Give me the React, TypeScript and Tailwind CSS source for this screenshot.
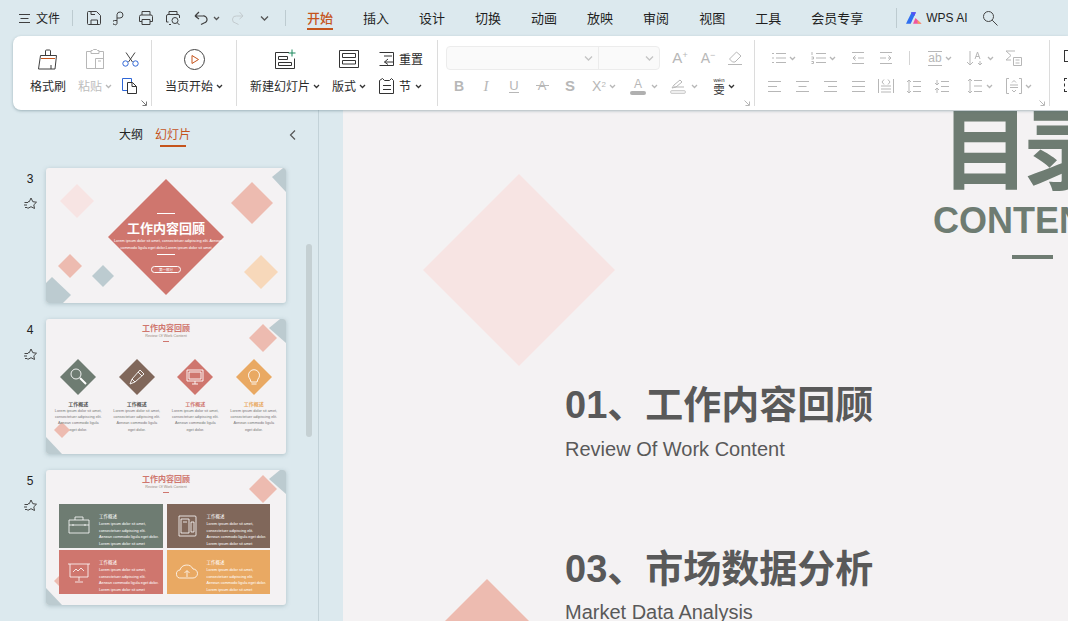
import React from "react";

const UI = "font-['Noto_Sans_CJK_SC','Noto_Sans',sans-serif]";
const LOREM = "Lorem ipsum dolor sit amet, consectetuer adipiscing elit. Aenean commodo ligula eget dolor.";

function I({ w = 16, h = 16, vb, c, children }: { w?: number; h?: number; vb?: string; c?: string; children: React.ReactNode }) {
  return (
    <svg width={w} height={h} viewBox={vb ?? `0 0 ${w} ${h}`} fill="none" stroke={c ?? "#3f3f3f"} strokeWidth="1" className="shrink-0">
      {children}
    </svg>
  );
}
const Chev = ({ c = "#555", s = 7 }: { c?: string; s?: number }) => (
  <svg width={s} height={5} viewBox={s === 7 ? "0 0 7 5" : "0 0 9 5"} fill="none" stroke={c} strokeWidth="1.3" className="shrink-0">
    {s === 7 ? <path d="M1 1l2.500 2.500L6 1" /> : <path d="M1 .5l3.500 3.500L8 .5" />}
  </svg>
);
const M = "#b7b7b7";

const Corner = ({ c = M }: { c?: string }) => (
  <svg width="6" height="6" viewBox="0 0 6 6" fill="none" stroke={c} strokeWidth="1" className="shrink-0">
    <path d="M.5 .5L5 5M5.500 1.500v4h-4" />
  </svg>
);

function TopBar() {
  const tabs = ["插入", "设计", "切换", "动画", "放映", "审阅", "视图", "工具"];
  return (
    <div className="flex h-[36px] shrink-0 items-center pl-[19px] text-[#1f1f1f]">
      <I w={11} h={11}>
        <path d="M0 1.500h11M1.500 5.500h8M0 9.500h11" />
      </I>
      <span className="ml-[6px] text-[12px]">文件</span>
      <div className="ml-[12px] h-[16px] w-px bg-[#bdcbd0]" />
      <div className="ml-[13px] flex items-center gap-[11px]">
        <I w={16} h={16}>
          <path d="M1.500 2.500a1 1 0 0 1 1-1h8l4 4v8a1 1 0 0 1-1 1h-11a1 1 0 0 1-1-1zM5 14.500V10h6.500v4.500M5 1.500v3h4" />
        </I>
        <I w={14} h={16}>
          <path d="M1.500 14.500a2 2 0 0 1 0-4h2.500v3a1.600 1.600 0 0 1-2.500 1zM4 10.500V4.500a3 3 0 1 1 3 3.500H4" />
        </I>
        <I w={16} h={16}>
          <path d="M4 5V1.500h8V5M4 11.500H1.500V6.500a1.500 1.500 0 0 1 1.500-1.500h10a1.500 1.500 0 0 1 1.500 1.500v5H12M4 9.500h8v5H4z" />
        </I>
        <I w={16} h={16}>
          <path d="M4 4.500V1.500h8v3M3.500 12H1.500V6a1.500 1.500 0 0 1 1.500-1.500h10A1.500 1.500 0 0 1 14.500 6v2M6 14.500H4" />
          <circle cx="10" cy="10.500" r="3" />
          <path d="M12.200 12.700l2.300 2.300" />
        </I>
      </div>
      <div className="ml-[13px]">
        <I w={14} h={16}>
          <path d="M1 6l4-4M1 6l4 3M1 6h8a3.500 3.500 0 0 1 1 7l-3 1.500" strokeWidth="1.200" />
        </I>
      </div>
      <div className="ml-[5px]"><Chev /></div>
      <div className="ml-[12px]">
        <I w={12} h={16} c="#c3cbce">
          <path d="M11 6L7.500 2M11 6L7.500 9M11 6H4.500a3.300 3.300 0 0 0-1 7l3 1.500" />
        </I>
      </div>
      <div className="ml-[16px]"><Chev s={9} /></div>
      <div className="ml-[16px] h-[16px] w-px bg-[#bdcbd0]" />
      <div className="ml-[21px] flex h-[36px] flex-col items-center justify-center">
        <span className="mt-[2px] text-[13px] leading-[18px] font-medium text-[#c5541c]">开始</span>
        <div className="mt-[1px] h-[2px] w-[26px] bg-[#c5541c]" />
      </div>
      <div className="ml-[30px] flex gap-[30px] text-[13px]">
        {tabs.map((t) => (
          <span key={t}>{t}</span>
        ))}
      </div>
      <span className="ml-[30px] text-[13px]">会员专享</span>
      <div className="ml-[33px] h-[20px] w-px bg-[#bdcbd0]" />
      <svg width="16" height="12" viewBox="0 0 17 12" className="ml-[9px]">
        <path d="M0 12L6 0h4.500L5 12z" fill="#2f6ff0" />
        <path d="M5 0h5.500L9 4z" fill="#5a4df2" />
        <path d="M7.500 12L10 6l6.500 6z" fill="#f0559f" />
        <path d="M12 8l4.500 4h-4z" fill="#f7a05a" />
      </svg>
      <span className="ml-[4px] font-['Liberation_Sans',sans-serif] text-[12px]">WPS AI</span>
      <div className="ml-[14px]">
        <I w={16} h={16} c="#444">
          <circle cx="6.500" cy="6.500" r="5" />
          <path d="M10.200 10.200l5.300 5.300" />
        </I>
      </div>
    </div>
  );
}

function BigCol({ w, icon, label, chev, muted }: { w: string; icon: React.ReactNode; label: string; chev?: boolean; muted?: boolean }) {
  return (
    <div className={`flex shrink-0 flex-col items-center ${w}`}>
      <div className="flex h-[28px] items-center justify-center">{icon}</div>
      <div className={`flex h-[26px] items-center gap-[3px] text-[12px] whitespace-nowrap ${muted ? "text-[#bdbdbd]" : "text-[#2a2a2a]"}`}>
        {label}
        {chev && <Chev c={muted ? M : "#333"} />}
      </div>
    </div>
  );
}

const Sep = () => <div className="h-[66px] w-px shrink-0 self-center bg-[#dcdcdc]" />;

function Slot({ w, children, gap = "gap-[3px]" }: { w: string; children: React.ReactNode; gap?: string }) {
  return <div className={`flex shrink-0 items-center justify-center ${gap} ${w}`}>{children}</div>;
}

const Lines = ({ a }: { a: "l" | "c" | "r" | "j" }) => {
  const m: Record<string, string> = {
    l: "M1 2.500h13M1 7.500h9M1 12.500h13",
    c: "M1 2.500h13M3.500 7.500h8M1 12.500h13",
    r: "M1 2.500h13M5 7.500h9M1 12.500h13",
    j: "M1 2.500h13M1 7.500h13M1 12.500h13",
  };
  return (
    <I w={15} h={15} c={M}>
      <path d={m[a]} />
    </I>
  );
};

function Ribbon() {
  return (
    <div className="relative z-10 ml-[13px] flex h-[74px] shrink-0 overflow-hidden rounded-l-[8px] bg-white shadow-[0_1px_3px_rgba(80,110,120,0.45)]">
      {/* clipboard */}
      <div className="relative flex w-[138px] shrink-0 pt-[9px] pl-[13px]">
        <BigCol
          w="w-[44px]"
          label="格式刷"
          icon={
            <I w={20} h={21}>
              <path d="M7.500 6.500V2a1 1 0 0 1 1-1h3a1 1 0 0 1 1 1v4.500" />
              <path d="M2.500 6.500h16l-1.500 13.500H.5z" />
              <path d="M3 9.500h14" stroke="#c5541c" />
              <path d="M13 20v-4" />
            </I>
          }
        />
        <BigCol
          w="w-[50px]"
          label="粘贴"
          muted
          chev
          icon={
            <I w={20} h={20} c={M}>
              <path d="M6 2.500H1.500v17h17v-17H14M6 1.500h1.500l1-1h3l1 1H14v3H6zM10.500 9.500h8v10h-8zM13 12h3" />
            </I>
          }
        />
        <div className="flex w-[20px] shrink-0 flex-col items-center">
          <div className="flex h-[28px] items-center">
            <svg width="17" height="15" viewBox="0 0 17 15" fill="none" strokeWidth="1">
              <path d="M4 .5l6.500 9.500M13 .5L6.500 10" stroke="#444" />
              <circle cx="3.500" cy="11.500" r="2.700" stroke="#2f66d6" />
              <circle cx="13.500" cy="11.500" r="2.700" stroke="#2f66d6" />
            </svg>
          </div>
          <div className="flex h-[26px] items-center">
            <svg width="16" height="16" viewBox="0 0 16 16" fill="none" strokeWidth="1">
              <path d="M5 12.500H.5V.5h9v4" stroke="#2f66d6" />
              <path d="M5.500 4.500h5l4 4v7h-9zM10 4.500v4h4.500" stroke="#333" />
            </svg>
          </div>
        </div>
        <div className="absolute right-[4px] bottom-[4px]"><Corner c="#777" /></div>
      </div>
      <Sep />
      {/* play */}
      <div className="flex w-[84px] shrink-0 pt-[9px]">
        <BigCol
          w="w-full"
          label="当页开始"
          chev
          icon={
            <svg width="21" height="21" viewBox="0 0 21 21" fill="none">
              <circle cx="10.500" cy="10.500" r="10" stroke="#444" />
              <path d="M8 6.500l6.500 4-6.500 4z" stroke="#c5541c" />
            </svg>
          }
        />
      </div>
      <Sep />
      {/* slides */}
      <div className="flex w-[200px] shrink-0 pt-[9px]">
        <BigCol
          w="w-[90px] ml-[3px]"
          label="新建幻灯片"
          chev
          icon={
            <svg width="21" height="20" viewBox="0 0 21 20" fill="none" stroke="#333">
              <path d="M14 3.500H.5v16h19v-10M3.500 7.500h9v3h-9zM3.500 13.500h13v3h-13z" />
              <path d="M17 .5v7M13.500 4h7" stroke="#1c8a5e" />
            </svg>
          }
        />
        <BigCol
          w="w-[38px]"
          label="版式"
          chev
          icon={
            <I w={20} h={18} c="#333">
              <path d="M.5.5h19v17H.5zM3.500 3.500h13v4h-13zM3.500 10.500h13v3.500h-13z" />
            </I>
          }
        />
        <div className="ml-[11px] flex flex-col">
          <div className="flex h-[28px] items-center gap-[2px] text-[12px] text-[#2a2a2a]">
            <I w={18} h={16} c="#333">
              <path d="M.5 1.500h14v13H.5M5 5h8M14.500 5v2M9 8l-3.500 3L9 13.500M5.500 11H14" />
            </I>
            重置
          </div>
          <div className="flex h-[26px] items-center gap-[4px] text-[12px] text-[#2a2a2a]">
            <I w={16} h={16} c="#333">
              <path d="M.5 2.500l3-2 2 2h5l2-2 2 2v13H.5zM4 7.500h8M4 11.500h8" />
            </I>
            节
            <Chev c="#333" />
          </div>
        </div>
      </div>
      <Sep />
      {/* font */}
      <div className="relative flex w-[316px] shrink-0 flex-col pt-[10px] pl-[8px]">
        <div className="flex h-[24px] items-center">
          <div className="flex h-[24px] w-[214px] rounded-[4px] border border-[#ececec] bg-[#fafafa]">
            <div className="flex w-[152px] items-center justify-end border-r border-[#ececec] pr-[5px]"><Chev c="#c4c4c4" s={9} /></div>
            <div className="flex flex-1 items-center justify-end pr-[5px]"><Chev c="#c4c4c4" s={9} /></div>
          </div>
          <Slot w="w-[32px] ml-[4px]">
            <span className="font-['Liberation_Sans',sans-serif] text-[15px] text-[#b7b7b7]">A<sup className="text-[9px]">+</sup></span>
          </Slot>
          <Slot w="w-[24px]">
            <span className="font-['Liberation_Sans',sans-serif] text-[14px] text-[#b7b7b7]">A<sup className="text-[9px]">−</sup></span>
          </Slot>
          <Slot w="w-[30px]">
            <I w={16} h={16} c={M}>
              <path d="M5.500 12l-3-3L9.500 2l4.500 4-6 6zM1 14.500h14" />
            </I>
          </Slot>
        </div>
        <div className="mt-[4px] flex h-[24px] items-center font-['Liberation_Sans',sans-serif] text-[#b7b7b7]">
          <Slot w="w-[26px]"><span className="text-[14px] font-bold">B</span></Slot>
          <Slot w="w-[28px]"><span className="font-['Liberation_Serif',serif] text-[15px] italic">I</span></Slot>
          <Slot w="w-[28px]"><span className="border-b border-[#b7b7b7] text-[13px] leading-[13px]">U</span></Slot>
          <Slot w="w-[28px]"><span className="relative text-[13px]">A<span className="absolute top-[9px] left-[-2px] h-px w-[13px] bg-[#b7b7b7]" /></span></Slot>
          <Slot w="w-[28px]"><span className="text-[15px] font-bold">S</span></Slot>
          <Slot w="w-[40px]"><span className="text-[14px]">X<sup className="text-[8px]">2</sup></span><Chev c={M} /></Slot>
          <Slot w="w-[40px]" gap="gap-[5px]">
            <span className="flex flex-col items-center text-[12px] leading-[12px]">A<span className="mt-[1px] h-[4px] w-[16px] rounded-[2px] bg-[#b0b0b0]" /></span>
            <Chev c={M} />
          </Slot>
          <Slot w="w-[40px]" gap="gap-[5px]">
            <span className="flex flex-col items-center">
              <I w={14} h={10} c={M}><path d="M1 9l2-3 6-5 2 2-6 5zM3 8h10" /></I>
              <span className="mt-[1px] h-[4px] w-[16px] rounded-[2px] border border-[#cfcfcf] bg-[#eeeeee]" />
            </span>
            <Chev c={M} />
          </Slot>
          <Slot w="w-[40px]">
            <span className="flex flex-col items-center text-[#333]">
              <span className="text-[6px] leading-[6px]">wén</span>
              <span className={`${UI} mt-[1px] text-[11px] leading-[11px]`}>雯</span>
            </span>
            <Chev c="#333" />
          </Slot>
        </div>
        <div className="absolute right-[4px] bottom-[4px]"><Corner /></div>
      </div>
      <Sep />
      {/* paragraph */}
      <div className="relative flex w-[294px] shrink-0 flex-col pt-[10px] pl-[5px]">
        <div className="flex h-[24px] items-center">
          <Slot w="w-[40px] ml-[3px]">
            <I w={15} h={14} c={M}><path d="M5 2.500h10M5 7h10M5 11.500h10M1 2.500h2M1 7h2M1 11.500h2" strokeWidth="1.200" /></I>
            <Chev c={M} />
          </Slot>
          <Slot w="w-[40px]">
            <I w={15} h={14} c={M}><path d="M5 2.500h10M5 7h10M5 11.500h10M1 1v3M.5 6h2v2h-2M.5 10.500h2v2h-2" /></I>
            <Chev c={M} />
          </Slot>
          <Slot w="w-[28px] ml-[1px]">
            <I w={14} h={14} c={M}><path d="M1 1.500h12M1 12.500h12M13 7H7M4.500 4.500L2 7l2.500 2.500M2 7h3" /></I>
          </Slot>
          <Slot w="w-[28px]">
            <I w={14} h={14} c={M}><path d="M1 1.500h12M1 12.500h12M1 7h6M9.500 4.500L12 7 9.500 9.500M12 7H9" /></I>
          </Slot>
          <div className="ml-[9px] h-[14px] w-px bg-[#d4d4d4]" />
          <Slot w="w-[38px] ml-[11px]">
            <span className="border-y border-[#b7b7b7] font-['Liberation_Sans',sans-serif] text-[12px] leading-[13px] text-[#b7b7b7]">ab</span>
            <Chev c={M} />
          </Slot>
          <Slot w="w-[38px] ml-[2px]">
            <span className="flex items-center text-[#b7b7b7]">
              <I w={18} h={16} c={M}><path d="M4 1v14M1 12l3 3 3-3M9 9l2.500-7L14 9M10 6.500h3M14 11v4M12 13l2 2 2-2" /></I>
            </span>
            <Chev c={M} />
          </Slot>
          <Slot w="w-[24px] ml-[2px]">
            <I w={17} h={16} c={M}><path d="M10 1H1l5 4.500L1 10h5M8.500 7.500h8v8h-8zM10.500 10h4M10.500 13h4" /></I>
          </Slot>
        </div>
        <div className="mt-[4px] flex h-[24px] items-center">
          <Slot w="w-[28px]"><Lines a="l" /></Slot>
          <Slot w="w-[28px]"><Lines a="c" /></Slot>
          <Slot w="w-[28px]"><Lines a="r" /></Slot>
          <Slot w="w-[28px]"><Lines a="j" /></Slot>
          <Slot w="w-[28px]">
            <I w={16} h={16} c={M}><path d="M.5 1v14M15.500 1v14M3 8h10M3 11h10M3 14h10M6 1.500L4 4l2 2.500M10 1.500L12 4l-2 2.500" /></I>
          </Slot>
          <Slot w="w-[28px]">
            <I w={16} h={15} c={M}><path d="M7 2.500h8M7 7.500h8M7 12.500h8M3 1v13M1 3l2-2 2 2M1 12l2 2 2-2" /></I>
          </Slot>
          <Slot w="w-[28px]">
            <I w={16} h={15} c={M}><path d="M7 2.500h8M7 7.500h8M7 12.500h8M3 1v5M1 4l2 2 2-2M3 9v5M1 11l2-2 2 2" /></I>
          </Slot>
          <Slot w="w-[40px] ml-[4px]">
            <I w={16} h={16} c={M}><path d="M7 2.500h8M7 8h8M7 13.500h8M3 1v14M1 3l2-2 2 2M1 13l2 2 2-2" /></I>
            <Chev c={M} />
          </Slot>
          <Slot w="w-[34px] ml-[2px]">
            <I w={16} h={16} c={M}><path d="M3 .5H.5v15H3M13 .5h2.500v15H13M4 7h8M4 9.500h8M6 4.500L8 2.500l2 2M6 12l2 2 2-2" /></I>
            <Chev c={M} />
          </Slot>
        </div>
        <div className="absolute right-[4px] bottom-[4px]"><Corner /></div>
      </div>
      <Sep />
      <div className="flex flex-col pt-[14px] pl-[14px]">
        <div className="h-[12px] w-[12px] border border-[#333]" />
        <div className="mt-[16px] h-[14px] w-[12px] border border-dashed border-[#333]" />
      </div>
    </div>
  );
}

function Star() {
  return (
    <I w={13} h={13} c="#444">
      <path d="M7 1l1.800 3.700 3.700.5-2.700 2.600.7 3.700L7 9.700 3.600 11.500M0.500 5.500h3.500M0 8h3M1 10.500h2.500M7 1L5.300 4.700H4" />
    </I>
  );
}

const D = (cx: number, cy: number, r: number, fill: string) => (
  <polygon key={`${cx}-${cy}`} points={`${cx},${cy - r} ${cx + r},${cy} ${cx},${cy + r} ${cx - r},${cy}`} fill={fill} />
);

function Thumb({ n, children }: { n: number; children: React.ReactNode }) {
  return (
    <div className="flex">
      <div className="flex w-[46px] shrink-0 flex-col items-center pl-[14px]">
        <span className="mt-[3px] font-['Liberation_Sans',sans-serif] text-[12px] leading-[16px] text-[#222]">{n}</span>
        <div className="mt-[10px]"><Star /></div>
      </div>
      <div className="relative h-[135px] w-[240px] shrink-0 overflow-hidden rounded-[3px] bg-[#f4f2f3] shadow-[0_1px_4px_rgba(90,120,130,0.35)]">
        {children}
      </div>
    </div>
  );
}

function Slide3() {
  return (
    <Thumb n={3}>
      <svg viewBox="0 0 240 135" className="absolute inset-0 h-full w-full">
        {D(31, 33, 17, "#f7e4e3")}
        {D(206, 35, 21, "#edbbb0")}
        {D(24, 98, 12, "#edbbb0")}
        {D(57, 108, 11, "#bccbd0")}
        {D(215, 104, 17, "#f7d8ba")}
        {D(120, 69, 58, "#cf766e")}
        <polygon points="226,9 237,0 240,0 240,24" fill="#bccbd0" />
        <polygon points="0,115 6,109 25,127 17,135 0,135" fill="#bccbd0" />
      </svg>
      <div className={`relative flex h-full flex-col items-center pt-[45px] text-white ${UI}`}>
        <div className="h-px w-[18px] bg-white" />
        <div className="mt-[6px] text-[13px] leading-[16px] font-bold">工作内容回顾</div>
        <div className="mt-[2px] w-[104px] text-center font-['Liberation_Sans',sans-serif] text-[3.800px] leading-[6.500px] whitespace-nowrap">
          Lorem ipsum dolor sit amet, consectetuer adipiscing elit. Aenean
          <br />
          commodo ligula eget dolor.Lorem ipsum dolor sit amet
        </div>
        <div className="mt-[3px] h-px w-[18px] bg-white" />
        <div className="mt-[11px] flex h-[7px] w-[30px] items-center justify-center rounded-full border border-white text-[3.500px]">第一部分</div>
      </div>
    </Thumb>
  );
}

function Header() {
  return (
    <div className={`relative flex flex-col items-center pt-[3px] ${UI}`}>
      <div className="text-[8px] leading-[12px] font-bold text-[#cf766e]">工作内容回顾</div>
      <div className="font-['Liberation_Sans',sans-serif] text-[3.800px] leading-[5px] text-[#9a8a80]">Review Of Work Content</div>
      <div className="mt-[2px] h-px w-[6px] bg-[#cf766e]" />
    </div>
  );
}

const IconWhite = ({ kind }: { kind: number }) => {
  const p: Record<number, React.ReactNode> = {
    0: (<><circle cx="8" cy="7" r="5" /><path d="M12 11l6 6" strokeWidth="2" /></>),
    1: (<path d="M3 17l2-5L13 3l4 4-9 8zM5 12l3 3M11 5l4 4" />),
    2: (<path d="M2 3h16v11H2zM4 5h12v7H4zM7 17h6M10 14v3" />),
    3: (<path d="M6 12a5.500 5.500 0 1 1 8 0l-1 3H7zM7.500 17h5" />),
  };
  return (
    <svg viewBox="0 0 20 20" width="20" height="20" fill="none" stroke="#fff" strokeWidth="0.9">
      {p[kind]}
    </svg>
  );
};

function Slide4() {
  const cols = [
    { c: "text-[#555]", k: 0, col: "#6e7c72" },
    { c: "text-[#555]", k: 1, col: "#80675a" },
    { c: "text-[#cf766e]", k: 2, col: "#cf766e" },
    { c: "text-[#e9a963]", k: 3, col: "#e9a963" },
  ];
  return (
    <Thumb n={4}>
      <svg viewBox="0 0 240 135" className="absolute inset-0 h-full w-full">
        {D(217, 19, 14, "#edbbb0")}
        {D(16, 111, 8, "#edbbb0")}
        <polygon points="223,9 234,0 240,0 240,24" fill="#bccbd0" />
        <polygon points="0,118 16,135 0,135" fill="#bccbd0" />
      </svg>
      <Header />
      <div className="relative mt-[17px] grid grid-cols-4 px-[3px]">
        {cols.map((x) => (
          <div key={x.k} className={`flex flex-col items-center ${UI}`}>
            <div className="relative flex h-[36px] w-[36px] items-center justify-center">
              <svg viewBox="0 0 36 36" className="absolute inset-0 h-full w-full">{D(18, 18, 18, x.col)}</svg>
              <div className="relative flex"><IconWhite kind={x.k} /></div>
            </div>
            <div className={`mt-[5px] text-[5px] leading-[8px] font-bold ${x.c}`}>工作概述</div>
            <div className="w-[48px] text-center font-['Liberation_Sans',sans-serif] text-[3.800px] leading-[6.200px] text-[#777]">{LOREM}</div>
          </div>
        ))}
      </div>
    </Thumb>
  );
}

function Card({ bg, kind }: { bg: string; kind: number }) {
  const icons: Record<number, React.ReactNode> = {
    0: <path d="M2 6h20v13H2zM8 6V3h8v3M2 11h20M6 10v2M18 10v2" />,
    1: <path d="M4 2h16a1 1 0 0 1 1 1v18a1 1 0 0 1-1 1H4zM6 5h8v14H6zM8 8h4M16 8v10h3V8z" />,
    2: <path d="M1 4h22M3 4v13h18V4M12 17v4M8 22h8M6 12l3-3 2 2 3-3 3 3" />,
    3: <path d="M6 18a4 4 0 0 1-1-8 7 7 0 0 1 13-1 4.500 4.500 0 0 1 0 9zM12 17v-6M9.500 13l2.500-2.500 2.500 2.500" />,
  };
  return (
    <div className={`flex h-[44px] items-center overflow-hidden ${bg}`}>
      <div className="flex w-[40px] shrink-0 justify-center">
        <svg width="24" height="24" viewBox="0 0 24 24" fill="none" stroke="#fff" strokeWidth="0.8">{icons[kind]}</svg>
      </div>
      <div className={`min-w-0 flex-1 self-start pt-[8px] pr-[3px] text-white ${UI}`}>
        <div className="text-[4.500px] leading-[9px]">工作概述</div>
        <div className="font-['Liberation_Sans',sans-serif] text-[3.800px] leading-[6.500px]">
          Lorem ipsum dolor sit amet, consectetuer adipiscing elit. Aenean commodo ligula eget dolor. Lorem ipsum dolor sit amet
        </div>
      </div>
    </div>
  );
}

function Slide5() {
  return (
    <Thumb n={5}>
      <svg viewBox="0 0 240 135" className="absolute inset-0 h-full w-full">
        {D(217, 19, 14, "#edbbb0")}
        {D(16, 111, 8, "#edbbb0")}
        <polygon points="223,9 234,0 240,0 240,24" fill="#bccbd0" />
        <polygon points="0,118 16,135 0,135" fill="#bccbd0" />
      </svg>
      <Header />
      <div className="relative mt-[11px] ml-[13px] grid w-[211px] grid-cols-2 gap-x-[4px] gap-y-[2px]">
        <Card bg="bg-[#6e7c72]" kind={0} />
        <Card bg="bg-[#80675a]" kind={1} />
        <Card bg="bg-[#cf766e]" kind={2} />
        <Card bg="bg-[#e9a963]" kind={3} />
      </div>
    </Thumb>
  );
}

function Sidebar() {
  return (
    <div className={`relative w-[319px] shrink-0 border-r border-[#c3d2d8] ${UI}`}>
      <div className="flex h-[58px] items-start pt-[15px] pr-[22px] pl-[119px] text-[12px]">
        <span className="leading-[18px] text-[#222]">大纲</span>
        <div className="ml-[12px] flex flex-col items-center">
          <span className="leading-[18px] text-[#c5541c]">幻灯片</span>
          <div className="mt-[2px] h-[2px] w-[26px] bg-[#c5541c]" />
        </div>
        <div className="mt-[5px] ml-auto">
          <I w={7} h={10} c="#555"><path d="M6 .5L1.500 5 6 9.500" strokeWidth="1.200" /></I>
        </div>
      </div>
      <div className="flex flex-col gap-[16px]">
        <Slide3 />
        <Slide4 />
        <Slide5 />
      </div>
      <div className="absolute top-[134px] left-[306px] h-[193px] w-[6px] rounded-full bg-[#c5d0d3]" />
    </div>
  );
}

function Canvas() {
  return (
    <div className="relative ml-[24px] flex-1 overflow-hidden bg-[#f4f2f3] font-['Liberation_Sans','Noto_Sans_CJK_SC',sans-serif]">
      <svg width="725" height="511" viewBox="0 0 725 511" className="absolute inset-0">
        {D(176, 160, 96, "#f7e4e3")}
        {D(144, 531, 62, "#edbbb0")}
      </svg>
      <div className={`absolute top-[-11px] left-[598px] text-[89px] leading-[90px] font-bold tracking-[-7px] whitespace-nowrap text-[#6e7c72] ${UI}`}>目录</div>
      <div className="absolute top-[90px] left-[590px] text-[36px] leading-[42px] font-bold whitespace-nowrap text-[#6e7c72]">CONTENTS</div>
      <div className="absolute top-[145px] left-[669px] h-[4px] w-[41px] bg-[#6e7c72]" />
      <div className="absolute top-[264px] left-[222px] whitespace-nowrap text-[#595959]">
        <div className={`text-[38px] leading-[56px] font-bold ${UI}`}><span className="font-['Liberation_Sans']">01</span>、工作内容回顾</div>
        <div className="mt-[3px] text-[20px] leading-[26px]">Review Of Work Content</div>
      </div>
      <div className="absolute top-[428px] left-[222px] whitespace-nowrap text-[#595959]">
        <div className={`text-[38px] leading-[56px] font-bold ${UI}`}><span className="font-['Liberation_Sans']">03</span>、市场数据分析</div>
        <div className="mt-[2px] text-[20px] leading-[26px]">Market Data Analysis</div>
      </div>
    </div>
  );
}

export default function App() {
  return (
    <div className={`flex h-[621px] w-[1068px] flex-col overflow-hidden bg-[#dce9ee] ${UI}`}>
      <TopBar />
      <Ribbon />
      <div className="flex min-h-0 flex-1">
        <Sidebar />
        <Canvas />
      </div>
    </div>
  );
}
